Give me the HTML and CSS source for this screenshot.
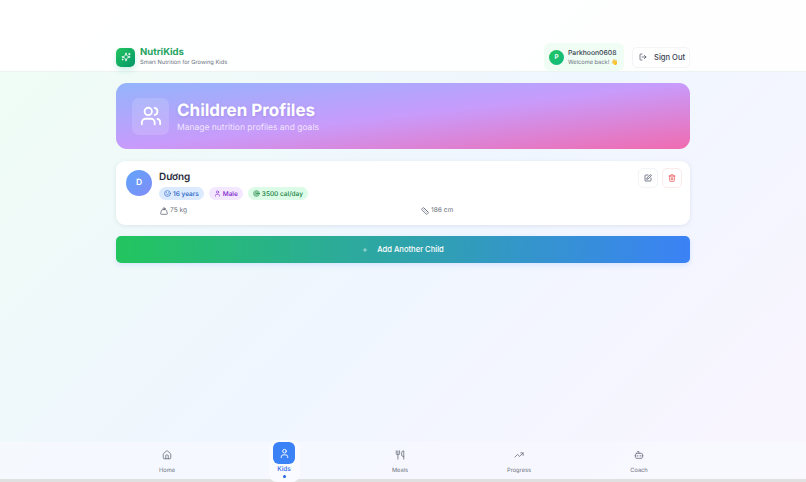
FILE: index.html
```html
<!DOCTYPE html>
<html lang="en">

<head>
    <meta charset="UTF-8">
    <meta name="viewport" content="width=device-width, initial-scale=1.0">
    <title>NutriKids</title>
    <link rel="stylesheet" href="styles.css">
</head>

<body>
    <header class="topbar">
        <div class="topbar-inner">
            <div class="brand">
                <div class="brand-icon">
                    <svg viewBox="0 0 24 24" class="icon"><path d="M9.937 15.5A2 2 0 0 0 8.5 14.063l-6.135-1.582a.5.5 0 0 1 0-.962L8.5 9.936A2 2 0 0 0 9.937 8.5l1.582-6.135a.5.5 0 0 1 .963 0L14.063 8.5A2 2 0 0 0 15.5 9.937l6.135 1.581a.5.5 0 0 1 0 .964L15.5 14.063a2 2 0 0 0-1.437 1.437l-1.582 6.135a.5.5 0 0 1-.963 0z"/><path d="M20 3v4M22 5h-4M4 17v2M5 18H3"/></svg>
                </div>
                <div>
                    <div class="brand-name">NutriKids</div>
                    <div class="brand-sub">Smart Nutrition for Growing Kids</div>
                </div>
            </div>
            <div class="user-area">
                <div class="user-pill">
                    <div class="user-avatar">P</div>
                    <div>
                        <div class="user-name">Parkhoon0608</div>
                        <div class="user-hello">Welcome back! 👋</div>
                    </div>
                </div>
                <button class="signout">
                    <svg viewBox="0 0 24 24" class="icon"><path d="M9 21H5a2 2 0 0 1-2-2V5a2 2 0 0 1 2-2h4"/><path d="m16 17 5-5-5-5M21 12H9"/></svg>
                    Sign Out
                </button>
            </div>
        </div>
    </header>

    <main class="content">
        <section class="hero">
            <div class="hero-icon">
                <svg viewBox="0 0 24 24" class="icon"><path d="M16 21v-2a4 4 0 0 0-4-4H6a4 4 0 0 0-4 4v2"/><circle cx="9" cy="7" r="4"/><path d="M22 21v-2a4 4 0 0 0-3-3.87M16 3.13a4 4 0 0 1 0 7.75"/></svg>
            </div>
            <div class="hero-text">
                <h1 class="hero-title">Children Profiles</h1>
                <p class="hero-sub">Manage nutrition profiles and goals</p>
            </div>
        </section>

        <section class="child-card">
            <div class="child-top">
                <div class="child-avatar">D</div>
                <div class="child-main">
                    <h2 class="child-name">Dương</h2>
                    <div class="tags">
                        <span class="tag tag-blue">
                            <svg viewBox="0 0 24 24" class="icon"><circle cx="12" cy="12" r="10"/><path d="M8 14s1.5 2 4 2 4-2 4-2M9 9h.01M15 9h.01"/></svg>
                            16 years
                        </span>
                        <span class="tag tag-purple">
                            <svg viewBox="0 0 24 24" class="icon"><path d="M19 21v-2a4 4 0 0 0-4-4H9a4 4 0 0 0-4 4v2"/><circle cx="12" cy="7" r="4"/></svg>
                            Male
                        </span>
                        <span class="tag tag-green">
                            <svg viewBox="0 0 24 24" class="icon"><circle cx="12" cy="12" r="10"/><circle cx="12" cy="12" r="6"/><circle cx="12" cy="12" r="2"/></svg>
                            3500 cal/day
                        </span>
                    </div>
                </div>
                <div class="child-actions">
                    <button class="action-btn">
                        <svg viewBox="0 0 24 24" class="icon"><path d="M12 3H5a2 2 0 0 0-2 2v14a2 2 0 0 0 2 2h14a2 2 0 0 0 2-2v-7"/><path d="M18.4 2.6a2.1 2.1 0 0 1 3 3L12 15l-4 1 1-4z"/></svg>
                    </button>
                    <button class="action-btn action-delete">
                        <svg viewBox="0 0 24 24" class="icon"><path d="M3 6h18M19 6v14a2 2 0 0 1-2 2H7a2 2 0 0 1-2-2V6M8 6V4a2 2 0 0 1 2-2h4a2 2 0 0 1 2 2v2M10 11v6M14 11v6"/></svg>
                    </button>
                </div>
            </div>
            <div class="child-stats">
                <div class="stat">
                    <svg viewBox="0 0 24 24" class="icon"><circle cx="12" cy="5" r="3"/><path d="M6.5 8a2 2 0 0 0-1.9 1.5L2.1 18.7A2.5 2.5 0 0 0 4.5 22h15a2.5 2.5 0 0 0 2.4-3.3L19.4 9.5A2 2 0 0 0 17.5 8z"/></svg>
                    75 kg
                </div>
                <div class="stat">
                    <svg viewBox="0 0 24 24" class="icon"><path d="M21.3 15.3a2.4 2.4 0 0 1 0 3.4l-2.6 2.6a2.4 2.4 0 0 1-3.4 0L2.7 8.7a2.4 2.4 0 0 1 0-3.4l2.6-2.6a2.4 2.4 0 0 1 3.4 0zM14.5 12.5l2-2M11.5 9.5l2-2M8.5 6.5l2-2M17.5 15.5l2-2"/></svg>
                    186 cm
                </div>
            </div>
        </section>

        <button class="add-child">
            <svg viewBox="0 0 24 24" class="icon"><path d="M5 12h14M12 5v14"/></svg>
            Add Another Child
        </button>
    </main>

    <nav class="bottom-nav">
        <a class="nav-item">
            <svg viewBox="0 0 24 24" class="icon"><path d="M15 21v-8a1 1 0 0 0-1-1h-4a1 1 0 0 0-1 1v8"/><path d="M3 10a2 2 0 0 1 .7-1.5l7-6a2 2 0 0 1 2.6 0l7 6a2 2 0 0 1 .7 1.5v9a2 2 0 0 1-2 2H5a2 2 0 0 1-2-2z"/></svg>
            Home
        </a>
        <a class="nav-item nav-active">
            <span class="nav-active-icon">
                <svg viewBox="0 0 24 24" class="icon"><path d="M19 21v-2a4 4 0 0 0-4-4H9a4 4 0 0 0-4 4v2"/><circle cx="12" cy="7" r="4"/></svg>
            </span>
            Kids
            <span class="nav-dot"></span>
        </a>
        <a class="nav-item">
            <svg viewBox="0 0 24 24" class="icon"><path d="M3 2v7c0 1.1.9 2 2 2h4a2 2 0 0 0 2-2V2M7 2v20M21 15V2a5 5 0 0 0-5 5v6c0 1.1.9 2 2 2zm0 0v7"/></svg>
            Meals
        </a>
        <a class="nav-item">
            <svg viewBox="0 0 24 24" class="icon"><path d="M16 7h6v6"/><path d="m22 7-8.5 8.5-5-5L2 17"/></svg>
            Progress
        </a>
        <a class="nav-item">
            <svg viewBox="0 0 24 24" class="icon"><path d="M12 8V4H8"/><rect x="4" y="8" width="16" height="12" rx="2"/><path d="M2 14h2M20 14h2M15 13v2M9 13v2"/></svg>
            Coach
        </a>
    </nav>
</body>

</html>
```

FILE: styles.css
```css
* {
    margin: 0;
    padding: 0;
    box-sizing: border-box;
}

html,
body {
    height: 482px;
    overflow: hidden;
}

body {
    font-family: Inter, "Noto Sans", sans-serif;
    color: #1f2937;
    text-rendering: geometricPrecision;
    background: linear-gradient(135deg, #f0fdf4 0%, #eff6ff 50%, #faf5ff 100%);
    position: relative;
}

button {
    font-family: inherit;
    cursor: pointer;
}

.icon {
    display: block;
    fill: none;
    stroke: currentColor;
    stroke-width: 2;
    stroke-linecap: round;
    stroke-linejoin: round;
}

.topbar {
    height: 72px;
    background: rgba(255, 255, 255, 0.9);
    border-bottom: 1px solid #edf2f2;
}

.topbar-inner {
    width: 574px;
    height: 71px;
    margin: 0 auto;
    padding-top: 43px;
    display: flex;
    justify-content: space-between;
}

.brand {
    display: flex;
    align-items: center;
    gap: 5px;
    height: 28px;
}

.brand-icon {
    width: 19px;
    height: 19px;
    border-radius: 5px;
    background: linear-gradient(135deg, #22c55e, #059669);
    box-shadow: 0 3px 6px rgba(16, 185, 129, 0.2);
    color: #fff;
    display: flex;
    align-items: center;
    justify-content: center;
}

.brand-icon .icon {
    width: 10px;
    height: 10px;
}

.brand-name {
    font-size: 9.5px;
    font-weight: 700;
    line-height: 11px;
    color: #1fa35f;
}

.brand-sub {
    font-size: 5.7px;
    line-height: 8px;
    margin-top: 1px;
    color: #6b7280;
}

.user-area {
    display: flex;
    align-items: center;
    gap: 8px;
    height: 28px;
}

.user-pill {
    width: 80px;
    height: 28px;
    padding-left: 5px;
    display: flex;
    align-items: center;
    gap: 4px;
    border-radius: 6px;
    background: #f0fdf4;
}

.user-avatar {
    width: 15px;
    height: 15px;
    border-radius: 50%;
    background: linear-gradient(135deg, #22c55e, #10b981);
    color: #fff;
    font-size: 6.4px;
    font-weight: 600;
    display: flex;
    align-items: center;
    justify-content: center;
}

.user-name {
    font-size: 6.8px;
    font-weight: 500;
    line-height: 10px;
    color: #374151;
}

.user-hello {
    font-size: 5.7px;
    line-height: 8px;
    margin-top: 1px;
    white-space: nowrap;
    color: #6b7280;
}

.signout {
    width: 58px;
    height: 21px;
    padding-left: 6px;
    display: flex;
    align-items: center;
    gap: 7px;
    border: 1px solid #f3f4f6;
    border-radius: 5px;
    background: #fff;
    color: #374151;
    font-size: 7.6px;
    font-weight: 500;
    white-space: nowrap;
}

.signout .icon {
    width: 8px;
    height: 8px;
}

.content {
    width: 574px;
    margin: 11px auto 0;
}

.hero {
    height: 66px;
    padding: 0 16px;
    display: flex;
    align-items: center;
    gap: 8px;
    border-radius: 11px;
    background: linear-gradient(to bottom right, #93b4fb 0%, #c89bfb 50%, #f06bb0 100%);
}

.hero-icon {
    width: 37px;
    height: 37px;
    border-radius: 7px;
    background: rgba(255, 255, 255, 0.14);
    color: #fff;
    display: flex;
    align-items: center;
    justify-content: center;
}

.hero-icon .icon {
    width: 22px;
    height: 22px;
}

.hero-text {
    padding-top: 1px;
}

.hero-title {
    font-size: 17px;
    font-weight: 700;
    line-height: 22px;
    color: #fff;
    text-shadow: 0 1px 3px rgba(80, 60, 160, 0.2);
}

.hero-sub {
    font-size: 8.5px;
    line-height: 12px;
    color: rgba(255, 255, 255, 0.75);
}

.child-card {
    height: 64px;
    margin-top: 12px;
    padding: 7px 8px 0 10px;
    border-radius: 9px;
    background: #fff;
    box-shadow: 0 1px 4px rgba(100, 116, 139, 0.14);
}

.child-top {
    display: flex;
    gap: 7px;
}

.child-avatar {
    width: 26px;
    height: 26px;
    margin-top: 2px;
    border-radius: 50%;
    background: linear-gradient(135deg, #60a5fa, #818cf8);
    color: #fff;
    font-size: 8.5px;
    font-weight: 600;
    display: flex;
    align-items: center;
    justify-content: center;
}

.child-main {
    flex: 1;
    margin-top: 3px;
}

.child-name {
    font-size: 9.9px;
    font-weight: 600;
    line-height: 13px;
    color: #1f2937;
}

.tags {
    display: flex;
    gap: 5px;
    margin-top: 3px;
}

.tag {
    height: 13px;
    padding: 0 5px;
    display: flex;
    align-items: center;
    gap: 2px;
    border-radius: 7px;
    font-size: 6.5px;
    font-weight: 500;
}

.tag .icon {
    width: 7px;
    height: 7px;
}

.tag-blue {
    background: #dbeafe;
    color: #1d5fc4;
}

.tag-purple {
    background: #f3e8ff;
    color: #7e22ce;
}

.tag-green {
    background: #dcfce7;
    color: #15803d;
}

.child-actions {
    display: flex;
    gap: 4px;
}

.action-btn {
    width: 20px;
    height: 20px;
    border: 1px solid #f3f4f6;
    border-radius: 5px;
    background: #fff;
    color: #374151;
    display: flex;
    align-items: center;
    justify-content: center;
}

.action-btn .icon {
    width: 8px;
    height: 8px;
}

.action-delete {
    border-color: #fdeaea;
    color: #ef4444;
}

.child-stats {
    display: grid;
    grid-template-columns: 1fr 1fr;
    margin-top: 6px;
    padding-left: 34px;
}

.stat {
    display: flex;
    align-items: center;
    gap: 2px;
    font-size: 6.6px;
    line-height: 9px;
    color: #6b7280;
}

.stat .icon {
    width: 8px;
    height: 8px;
    color: #4b5563;
}

.add-child {
    width: 100%;
    height: 27px;
    margin-top: 11px;
    display: flex;
    align-items: center;
    justify-content: center;
    gap: 9px;
    border: none;
    border-radius: 5px;
    background: linear-gradient(90deg, #22c55e, #3b82f6);
    box-shadow: 0 2px 5px rgba(59, 130, 246, 0.15);
    color: #fff;
    font-size: 7.6px;
    font-weight: 500;
}

.add-child .icon {
    width: 6px;
    height: 6px;
}

.bottom-nav {
    position: absolute;
    left: 0;
    right: 0;
    bottom: 3px;
    height: 37px;
    padding-left: 108px;
    display: grid;
    grid-template-columns: 118px 116px 116px 122px 118px;
    background: rgba(248, 250, 255, 0.7);
}

.nav-item {
    display: flex;
    flex-direction: column;
    align-items: center;
    gap: 6px;
    padding-top: 8px;
    font-size: 5.7px;
    line-height: 9px;
    color: #6b7280;
}

.nav-item > .icon {
    width: 10px;
    height: 10px;
}

.nav-active {
    position: relative;
    z-index: 1;
    justify-self: center;
    width: 31px;
    height: 42px;
    margin-top: -2px;
    padding-top: 2px;
    gap: 1px;
    border-radius: 8px;
    background: #f9fbff;
    color: #2563eb;
    font-size: 6.4px;
    font-weight: 500;
}

.nav-active-icon {
    width: 22px;
    height: 22px;
    border-radius: 6px;
    background: #3b82f6;
    color: #fff;
    display: flex;
    align-items: center;
    justify-content: center;
}

.nav-active-icon .icon {
    width: 11px;
    height: 11px;
}

.nav-dot {
    width: 3px;
    height: 3px;
    border-radius: 50%;
    background: #2563eb;
}

body::after {
    content: "";
    position: absolute;
    left: 0;
    right: 0;
    bottom: 0;
    height: 3px;
    background: #e0e0e0;
}
```
